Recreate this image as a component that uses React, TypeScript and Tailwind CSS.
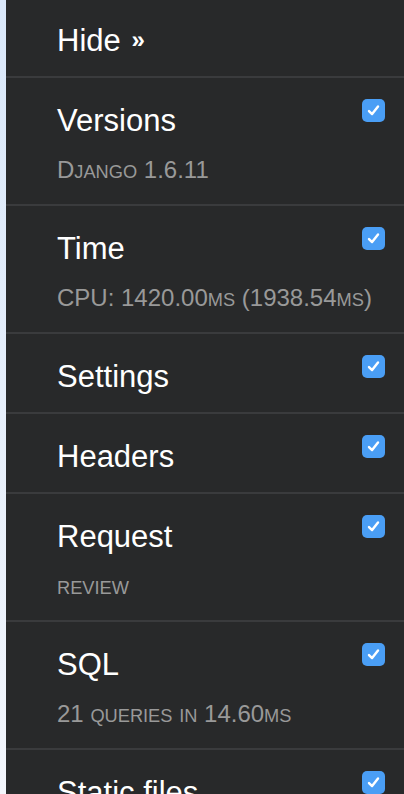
const panels = [
  { title: "Versions", sub: "Django 1.6.11" },
  { title: "Time", sub: "CPU: 1420.00ms (1938.54ms)" },
  { title: "Settings" },
  { title: "Headers" },
  { title: "Request", sub: "review" },
  { title: "SQL", sub: "21 queries in 14.60ms" },
  { title: "Static files", sub: "0 files used" },
];

// small caps drawn by hand: lowercase runs become smaller capitals
const SmallCaps = ({ text }: { text: string }) => {
  const parts = text.split(/([a-z]+)/).filter(Boolean);
  return (
    <>
      {parts.map((part, i) =>
        /^[a-z]+$/.test(part) ? (
          <span key={i} className="text-[0.76em] leading-none uppercase">
            {part}
          </span>
        ) : (
          <span key={i}>{part}</span>
        )
      )}
    </>
  );
};

const Checkbox = () => (
  <div className="mt-[-4px] flex h-[23px] w-[23px] shrink-0 items-center justify-center rounded-[5px] bg-[#4a9ef5]">
    <svg width="15" height="15" viewBox="0 0 16 16" fill="none">
      <path
        d="M3.2 8.6 L6.5 11.8 L12.8 3.8"
        stroke="white"
        strokeWidth="2.6"
        strokeLinecap="round"
        strokeLinejoin="round"
      />
    </svg>
  </div>
);

export default function App() {
  return (
    <div className="flex h-screen overflow-hidden font-['Liberation_Sans',Arial,sans-serif]">
      <div className="w-[6px] shrink-0 bg-gradient-to-b from-[#dae8fa] to-[#f3f6fc]" />
      <div className="flex-1 bg-[#28292a]">
        <div className="border-b-2 border-[#3a3b3d] pl-[51px] pt-[23px] pb-[17px]">
          <div className="text-[31px] leading-[36px] text-white">
            Hide <span className="ml-[2px] align-[3px] text-[24px] leading-none font-bold">»</span>
          </div>
        </div>
        {panels.map((p) => (
          <div
            key={p.title}
            className="border-b-2 border-[#3a3b3d] pl-[51px] pr-[19px] pt-[25px] pb-[17px]"
          >
            <div className="flex items-start justify-between">
              <div className="text-[31px] leading-[36px] text-white">{p.title}</div>
              <Checkbox />
            </div>
            {p.sub && (
              <div className="mt-[14px] h-[34px] whitespace-nowrap text-[24px] leading-[34px] text-[#999999]">
                <SmallCaps text={p.sub} />
              </div>
            )}
          </div>
        ))}
      </div>
    </div>
  );
}
